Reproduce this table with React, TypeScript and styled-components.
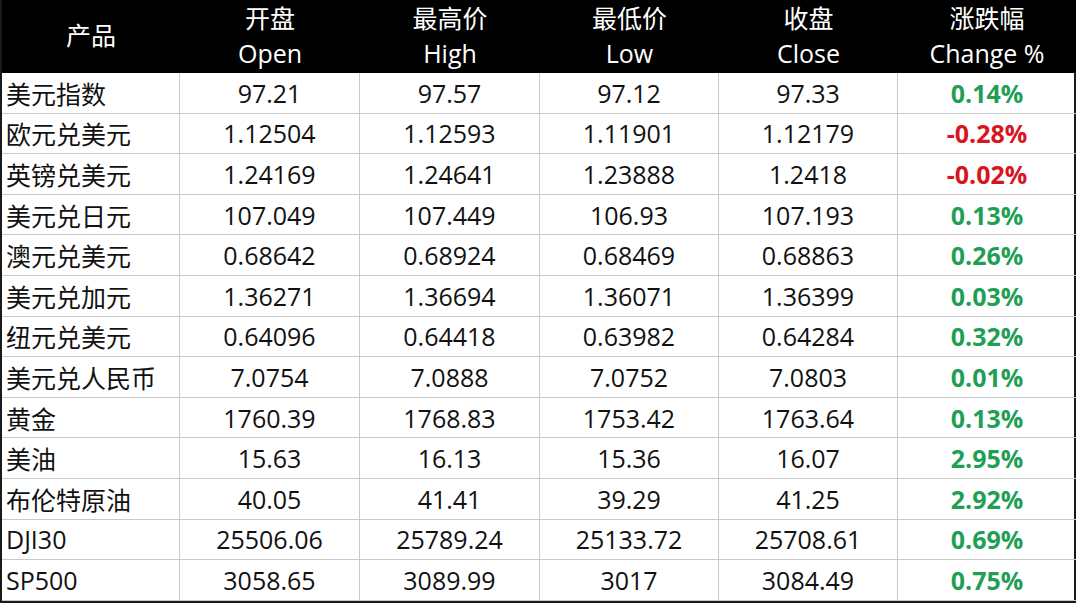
import React from "react";
import styled, { createGlobalStyle } from "styled-components";

const GlobalStyle = createGlobalStyle`
  html, body {
    margin: 0;
    padding: 0;
    background: #ffffff;
  }
  body {
    width: 1080px;
    height: 605px;
    overflow: hidden;
  }
`;

type Row = {
  name: string;
  open: string;
  high: string;
  low: string;
  close: string;
  change: string;
};

const rows: Row[] = [
  { name: "美元指数", open: "97.21", high: "97.57", low: "97.12", close: "97.33", change: "0.14%" },
  { name: "欧元兑美元", open: "1.12504", high: "1.12593", low: "1.11901", close: "1.12179", change: "-0.28%" },
  { name: "英镑兑美元", open: "1.24169", high: "1.24641", low: "1.23888", close: "1.2418", change: "-0.02%" },
  { name: "美元兑日元", open: "107.049", high: "107.449", low: "106.93", close: "107.193", change: "0.13%" },
  { name: "澳元兑美元", open: "0.68642", high: "0.68924", low: "0.68469", close: "0.68863", change: "0.26%" },
  { name: "美元兑加元", open: "1.36271", high: "1.36694", low: "1.36071", close: "1.36399", change: "0.03%" },
  { name: "纽元兑美元", open: "0.64096", high: "0.64418", low: "0.63982", close: "0.64284", change: "0.32%" },
  { name: "美元兑人民币", open: "7.0754", high: "7.0888", low: "7.0752", close: "7.0803", change: "0.01%" },
  { name: "黄金", open: "1760.39", high: "1768.83", low: "1753.42", close: "1763.64", change: "0.13%" },
  { name: "美油", open: "15.63", high: "16.13", low: "15.36", close: "16.07", change: "2.95%" },
  { name: "布伦特原油", open: "40.05", high: "41.41", low: "39.29", close: "41.25", change: "2.92%" },
  { name: "DJI30", open: "25506.06", high: "25789.24", low: "25133.72", close: "25708.61", change: "0.69%" },
  { name: "SP500", open: "3058.65", high: "3089.99", low: "3017", close: "3084.49", change: "0.75%" },
];

const headers = [
  { cn: "开盘", en: "Open" },
  { cn: "最高价", en: "High" },
  { cn: "最低价", en: "Low" },
  { cn: "收盘", en: "Close" },
  { cn: "涨跌幅", en: "Change %" },
];

const Table = styled.div`
  width: 1076px;
  display: grid;
  grid-template-columns: 178px 180px 180px 179px 179px 178px;
  grid-template-rows: 73px repeat(13, 40.6px);
  border-left: 2px solid #1a1a1a;
  border-right: 2px solid #1a1a1a;
  border-bottom: 2px solid #1a1a1a;
  box-sizing: border-box;
  font-family: "Open Sans", "Noto Sans CJK SC", sans-serif;
  font-size: 25px;
  color: #111111;
`;

const HeadCell = styled.div`
  background: #000000;
  color: #ffffff;
  display: flex;
  flex-direction: column;
  align-items: center;
  justify-content: center;
  line-height: 35px;
  padding-bottom: 2px;
`;

const Cell = styled.div<{ $first?: boolean; $last?: boolean; $tone?: "up" | "down" }>`
  display: flex;
  align-items: center;
  justify-content: ${(p) => (p.$first ? "flex-start" : "center")};
  padding-left: ${(p) => (p.$first ? "4px" : "0")};
  border-bottom: 1px solid #c9c9c9;
  border-right: ${(p) => (p.$last ? "none" : "1px solid #c9c9c9")};
  box-sizing: border-box;
  white-space: nowrap;
  font-weight: ${(p) => (p.$tone ? 700 : 400)};
  color: ${(p) => (p.$tone === "up" ? "#1f9f55" : p.$tone === "down" ? "#d9141c" : "#111111")};
`;

const App = () => {
  return (
    <>
      <GlobalStyle />
      <Table>
        <HeadCell>产品</HeadCell>
        {headers.map((h) => (
          <HeadCell key={h.en}>
            <span>{h.cn}</span>
            <span>{h.en}</span>
          </HeadCell>
        ))}
        {rows.map((r) => (
          <React.Fragment key={r.name}>
            <Cell $first>{r.name}</Cell>
            <Cell>{r.open}</Cell>
            <Cell>{r.high}</Cell>
            <Cell>{r.low}</Cell>
            <Cell>{r.close}</Cell>
            <Cell $last $tone={r.change.startsWith("-") ? "down" : "up"}>
              {r.change}
            </Cell>
          </React.Fragment>
        ))}
      </Table>
    </>
  );
};

export default App;
